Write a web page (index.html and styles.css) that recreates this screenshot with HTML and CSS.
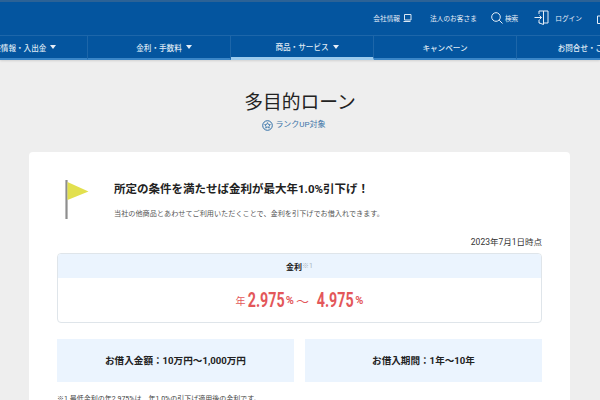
FILE: index.html
```html
<!DOCTYPE html>
<html lang="ja">
<head>
  <meta charset="UTF-8" />
  <title>多目的ローン</title>
  <link rel="stylesheet" href="styles.css">
</head>
<body>
  <header>
    <div class="topbar">
      <a class="toplink company">会社情報
        <svg width="9" height="8" viewBox="0 0 9 8"><path d="M1.500 .5h6.500v5.500H1.500zM.5 7.500h7" fill="none" stroke="#dbe7f3" stroke-width="1"/></svg>
      </a>
      <a class="toplink corporate">法人のお客さま</a>
      <a class="toplink search">
        <svg width="12" height="12" viewBox="0 0 12 12"><circle cx="5" cy="5" r="4.300" fill="none" stroke="#e6eef7" stroke-width="1"/><path d="M8.200 8.200L11.500 11.500" stroke="#e6eef7" stroke-width="1"/></svg>
        検索
      </a>
      <a class="toplink login">
        <svg width="15" height="15" viewBox="0 0 15 15"><path d="M5 4V1h9v12H9.500M5 10v3h1M9.500 1v13.500L5.500 13" fill="none" stroke="#e6eef7" stroke-width="1"/><path d="M.5 7.500h7M5.500 5.500l2 2-2 2" fill="none" stroke="#e6eef7" stroke-width="1"/></svg>
        ログイン
      </a>
      <svg class="cut-icon" width="12" height="12" viewBox="0 0 12 12"><path d="M.5 4h11v7.500H.5z" fill="none" stroke="#e6eef7" stroke-width="1"/></svg>
    </div>
    <nav>
      <a class="navitem has-menu">口座情報・入出金 <span class="arrow"></span></a>
      <a class="navitem has-menu">金利・手数料 <span class="arrow"></span></a>
      <a class="navitem has-menu active">商品・サービス <span class="arrow"></span></a>
      <a class="navitem">キャンペーン</a>
      <a class="navitem">お問合せ・ご相談</a>
    </nav>
  </header>

  <main>
    <h1>多目的ローン</h1>
    <p class="rank">
      <svg width="11" height="11" viewBox="0 0 11 11"><circle cx="5.500" cy="5.500" r="4.800" fill="none" stroke="#2f6ea6" stroke-width="1"/><path d="M5.500 2.600l.9 1.900 2 .2-1.500 1.400.4 2-1.800-1-1.800 1 .4-2-1.500-1.400 2-.2z" fill="none" stroke="#2f6ea6" stroke-width=".8"/></svg>
      ランクUP対象
    </p>

    <section class="card">
      <div class="promo">
        <svg class="flag" width="24" height="41" viewBox="0 0 24 41"><path d="M1.500 0v39" stroke="#8e8e8e" stroke-width="2.200"/><path d="M2.500 2l21 9.500-21 8.500z" fill="#e2e04e"/></svg>
        <div>
          <h2>所定の条件を満たせば金利が最大年1.0%引下げ！</h2>
          <p>当社の他商品とあわせてご利用いただくことで、金利を引下げでお借入れできます。</p>
        </div>
      </div>

      <p class="asof">2023年7月1日時点</p>

      <div class="rate">
        <div class="rate-head">金利<span class="note">※1</span></div>
        <div class="rate-body">
          <span class="small">年</span><span class="num">2.975</span><span class="small pct">%</span>
          <span class="tilde">～</span>
          <span class="num">4.975</span><span class="small pct">%</span>
        </div>
      </div>

      <div class="terms">
        <div class="term">お借入金額：10万円～1,000万円</div>
        <div class="term">お借入期間：1年～10年</div>
      </div>

      <p class="foot">※1 最低金利の年2.975%は、年1.0%の引下げ適用後の金利です。</p>
    </section>
  </main>
</body>
</html>
```

FILE: styles.css
```css
html, body {
  height: 100%;
  overflow: hidden;
}
body {
  margin: 0;
  background: #eeeeee;
  color: #222;
  font-family: "Roboto", "Noto Sans CJK JP", sans-serif;
}
p, h1, h2 {
  margin: 0;
}
header {
  background: #04559f;
  border-top: 2px solid #2c6296;
  color: #fff;
  box-shadow: 0 1px 2px rgba(0, 0, 0, .12);
}
.topbar {
  height: 33px;
  padding-bottom: 2px;
  display: flex;
  align-items: center;
  justify-content: flex-end;
  box-sizing: border-box;
  margin-right: -9px;
}
.toplink {
  display: flex;
  align-items: center;
  font-size: 6.700px;
  color: #e6eef7;
}
.company {
  gap: 3px;
  margin-right: 18px;
}
.corporate {
  margin-right: 14px;
}
.search {
  gap: 2px;
  margin-right: 16px;
}
.login {
  gap: 6px;
  margin-right: 15px;
}
.cut-icon {
  flex: none;
}
nav {
  display: flex;
  height: 25px;
  margin-left: -55px;
  width: 715px;
  border-top: 1px solid #1d66a9;
  box-sizing: border-box;
}
.navitem {
  flex: none;
  width: 143px;
  box-sizing: border-box;
  border-right: 1px solid #1d66a9;
  border-bottom: 2px solid #3a86c8;
  display: flex;
  align-items: center;
  justify-content: center;
  gap: 4px;
  font-size: 7.600px;
  font-weight: 500;
  color: #dfe9f4;
  white-space: nowrap;
}
.has-menu {
  padding-left: 10px;
}
.navitem.active {
  border-bottom: 3px solid #9ccbee;
}
.arrow {
  width: 0;
  height: 0;
  border-left: 3px solid transparent;
  border-right: 3px solid transparent;
  border-top: 4px solid #e6eef7;
}
main {
  padding-top: 31px;
}
h1 {
  font-size: 18.800px;
  font-weight: 400;
  line-height: 24px;
  text-align: center;
}
.rank {
  display: flex;
  justify-content: center;
  align-items: center;
  gap: 2px;
  margin-top: 4px;
  padding-right: 12px;
  font-size: 8px;
  line-height: 12px;
  color: #3d75a8;
}
.card {
  margin: 21px 30px 0 29px;
  padding: 28px 28px 0;
  background: #fff;
  border-radius: 4px;
}
.promo {
  display: flex;
  gap: 25px;
  margin-left: 8px;
}
.flag {
  flex: none;
}
.promo h2 {
  font-size: 11.500px;
  font-weight: 700;
  line-height: 18px;
}
.promo p {
  margin-top: 10px;
  font-size: 7.150px;
  line-height: 12px;
  color: #555;
}
.asof {
  margin-top: 15px;
  text-align: right;
  font-size: 8.500px;
  line-height: 12px;
  color: #333;
}
.rate {
  margin-top: 5px;
  border: 1px solid #dfe5ea;
  border-radius: 4px;
  overflow: hidden;
}
.rate-head {
  height: 24px;
  line-height: 24px;
  background: #ebf4fe;
  text-align: center;
  font-size: 8px;
  font-weight: 700;
}
.note {
  font-size: 7px;
  font-weight: 400;
  color: #aab4c0;
  vertical-align: 2px;
}
.rate-body {
  height: 44px;
  display: flex;
  align-items: center;
  justify-content: center;
  color: #e3575a;
  font-weight: 700;
}
.rate-body .num {
  font-size: 21px;
  transform: scaleX(.68);
  margin: 0 -7px;
}
.rate-body .small {
  font-size: 10px;
  font-weight: 400;
}
.rate-body .pct {
  font-size: 11px;
  font-weight: 700;
}
.tilde {
  font-size: 13px;
  font-weight: 400;
  margin: 0 6px 0 2px;
}
.terms {
  display: flex;
  gap: 11px;
  margin-top: 16px;
}
.term {
  flex: 1;
  height: 43px;
  line-height: 43px;
  background: #ebf4fe;
  text-align: center;
  font-size: 9.600px;
  font-weight: 700;
}
.foot {
  margin-top: 11px;
  font-size: 7px;
  line-height: 12px;
  color: #444;
}
```
